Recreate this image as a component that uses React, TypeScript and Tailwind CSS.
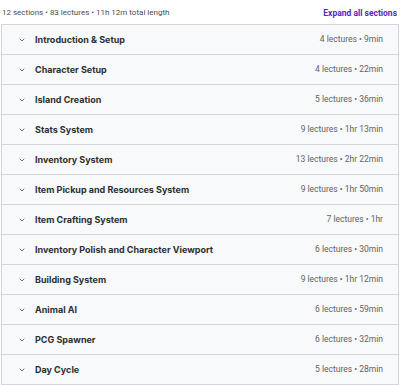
import { ChevronDown } from "lucide-react";

const sections = [
  { title: "Introduction & Setup", meta: "4 lectures • 9min" },
  { title: "Character Setup", meta: "4 lectures • 22min" },
  { title: "Island Creation", meta: "5 lectures • 36min" },
  { title: "Stats System", meta: "9 lectures • 1hr 13min" },
  { title: "Inventory System", meta: "13 lectures • 2hr 22min" },
  { title: "Item Pickup and Resources System", meta: "9 lectures • 1hr 50min" },
  { title: "Item Crafting System", meta: "7 lectures • 1hr" },
  { title: "Inventory Polish and Character Viewport", meta: "6 lectures • 30min" },
  { title: "Building System", meta: "9 lectures • 1hr 12min" },
  { title: "Animal AI", meta: "6 lectures • 59min" },
  { title: "PCG Spawner", meta: "6 lectures • 32min" },
  { title: "Day Cycle", meta: "5 lectures • 28min" },
];

export default function App() {
  return (
    <div className="w-[400px] h-[385px] bg-white text-[#2d2f31] overflow-hidden font-[Inter,sans-serif]">
      <div className="flex items-center justify-between h-[24px] pl-[2px] pr-[3px] pt-[2px]">
        <span className="text-[8px] leading-[10px] text-[#4a4d50] font-[Roboto]">
          12 sections • 83 lectures • 11h 12m total length
        </span>
        <button className="text-[8.5px] leading-[10px] font-bold text-[#5624d0] font-[Roboto]">
          Expand all sections
        </button>
      </div>
      <div className="mx-[1px] w-[398px] border border-[#d1d7dc] divide-y divide-[#d1d7dc]">
        {sections.map((s) => (
          <div
            key={s.title}
            className="box-content flex items-center h-[29px] bg-[#f7f9fa] pl-[16px] pr-[15px]"
          >
            <ChevronDown className="w-[8px] h-[8px] text-[#3e4143]" strokeWidth={2.25} />
            <span className="ml-[9px] text-[9px] font-bold">{s.title}</span>
            <span className="ml-auto text-[8.5px] text-[#5f6468] font-[Roboto]">{s.meta}</span>
          </div>
        ))}
      </div>
    </div>
  );
}
